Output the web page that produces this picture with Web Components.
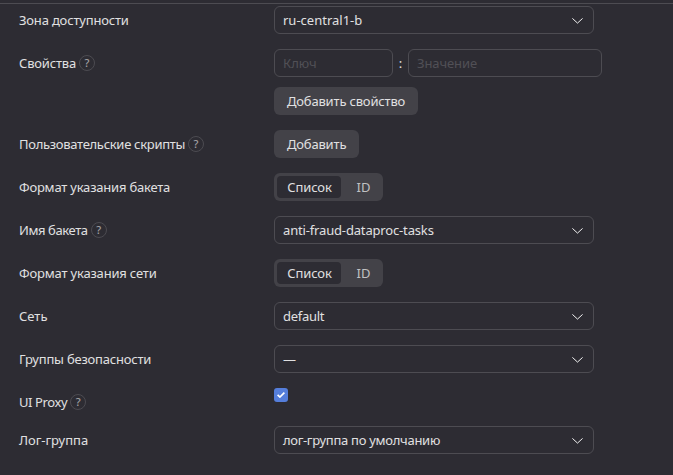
<!DOCTYPE html>
<html lang="ru">
<head>
<meta charset="utf-8">
<title>Создание кластера</title>
<style>
html{height:100%;background:#2d2c33}
body{margin:0;height:100%;overflow:hidden;color:#e0e0e1;font:13px/18px "Noto Sans",sans-serif}
</style>
</head>
<body>
<cluster-form></cluster-form>
<script>
const define = (name, html) => customElements.define(name, class extends HTMLElement {
  constructor() {
    super();
    this.attachShadow({ mode: 'open' });
    const t = document.createElement('template');
    t.innerHTML = html;
    this.shadowRoot.append(t.content.cloneNode(true));
  }
});

define('help-mark', `<style>
:host{display:inline-flex;box-sizing:border-box;width:16px;height:16px;border:1px solid #4c4b51;border-radius:50%;align-items:center;justify-content:center;flex:none;letter-spacing:0}
span{font-size:11px;line-height:14px;font-weight:500;color:#a0a0a3}
</style><span>?</span>`);

define('form-row', `<style>
:host{display:grid;grid-template-columns:255px 1fr;align-items:start}
.label{display:flex;align-items:center;gap:3px;padding-top:5px;height:18px;white-space:nowrap}
.control{display:flex;flex-direction:column;align-items:flex-start;gap:10px}
</style><div class="label"><slot name="label"></slot></div><div class="control"><slot></slot></div>`);

define('select-box', `<style>
:host{display:flex;box-sizing:border-box;width:320px;height:28px;border:1px solid #4d4c52;border-radius:6px;align-items:center;justify-content:space-between;padding:0 10px 0 8px}
svg{display:block;margin-top:2px}
</style><span><slot></slot></span>
<svg width="11" height="6" viewBox="0 0 11 6" fill="none" stroke="#f2f2f2" stroke-width="1"><path d="M.4.4 5.5 5.1 10.6.4"/></svg>`);

define('text-field', `<style>
:host{display:flex;box-sizing:border-box;height:28px;border:1px solid #4d4c52;border-radius:6px;align-items:center;padding:0 8px;color:#515056}
</style><slot></slot>`);

define('property-pair', `<style>
:host{display:grid;grid-template-columns:119px 15px 194px;align-items:center}
.colon{text-align:center}
.value{letter-spacing:-.1px}
</style><text-field>Ключ</text-field><span class="colon">:</span><text-field class="value">Значение</text-field>`);

define('action-button', `<style>
:host{display:inline-flex;height:28px;padding:0 13px;border-radius:6px;background:#434248;align-items:center;white-space:nowrap}
</style><slot></slot>`);

define('segment-switch', `<style>
:host{display:flex;box-sizing:border-box;width:109px;height:28px;padding:3px;border-radius:6px;background:#434248}
span{display:flex;align-items:center;justify-content:center}
.on{width:64px;background:#2d2c33;border-radius:4px;padding-left:1px;box-sizing:border-box;letter-spacing:-.1px}
.off{flex:1;padding-left:6px;color:#c0c0c2}
</style><span class="on">Список</span><span class="off">ID</span>`);

define('check-box', `<style>
:host{display:flex;width:14px;height:14px;border-radius:3px;background:#557edb;align-items:center;justify-content:center}
</style><svg width="8" height="6" viewBox="0 0 8 6" fill="none" stroke="#fff" stroke-width="1.7"><path d="M.6 2.8 2.9 5 7.4.6"/></svg>`);

define('cluster-form', `<style>
:host{display:block;padding-top:3px}
hr{height:1px;margin:0 0 2px;border:0;background:#4d4c52}
main{display:flex;flex-direction:column;gap:15px;padding-left:19px}
.t1{letter-spacing:-.1px}
.t2{letter-spacing:-.18px}
.t3{letter-spacing:-.21px}
.t4{letter-spacing:-.28px}
.t5{letter-spacing:-.4px}
</style>
<hr>
<main>
<form-row><span slot="label" class="t2">Зона доступности</span><select-box>ru-central1-b</select-box></form-row>
<form-row><span slot="label" class="t2">Свойства</span><help-mark slot="label"></help-mark><property-pair></property-pair><action-button class="t2">Добавить свойство</action-button></form-row>
<form-row><span slot="label" style="letter-spacing:-.3px">Пользовательские скрипты</span><help-mark slot="label"></help-mark><action-button class="t2">Добавить</action-button></form-row>
<form-row><span slot="label" class="t3">Формат указания бакета</span><segment-switch></segment-switch></form-row>
<form-row><span slot="label" class="t5">Имя бакета</span><help-mark slot="label"></help-mark><select-box style="letter-spacing:-.16px">anti-fraud-dataproc-tasks</select-box></form-row>
<form-row><span slot="label" class="t2">Формат указания сети</span><segment-switch></segment-switch></form-row>
<form-row><span slot="label">Сеть</span><select-box class="t4">default</select-box></form-row>
<form-row><span slot="label" class="t3">Группы безопасности</span><select-box>—</select-box></form-row>
<form-row><span slot="label" class="t5">UI Proxy</span><help-mark slot="label"></help-mark><check-box></check-box></form-row>
<form-row><span slot="label">Лог-группа</span><select-box class="t4">лог-группа по умолчанию</select-box></form-row>
</main>`);
</script>
</body>
</html>
